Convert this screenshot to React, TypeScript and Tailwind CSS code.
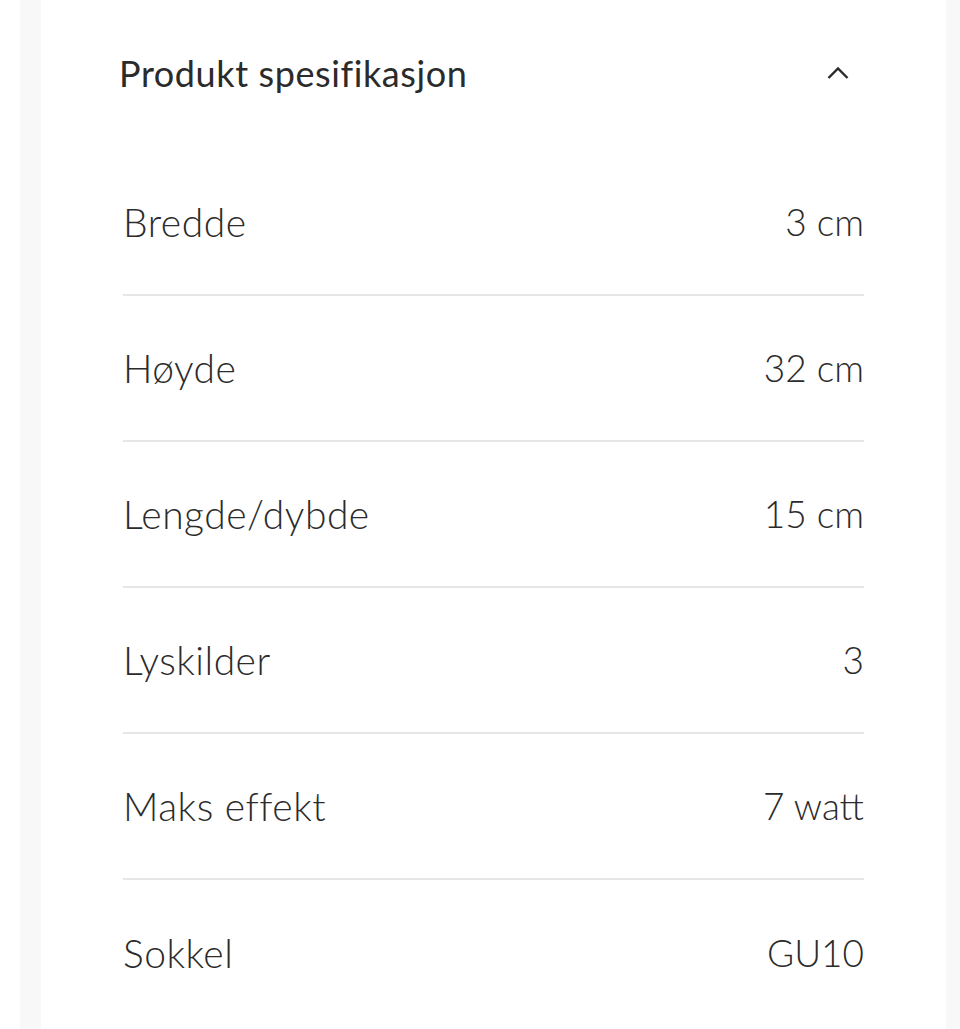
import React from "react";

const specs = [
  { label: "Bredde", value: "3 cm" },
  { label: "Høyde", value: "32 cm" },
  { label: "Lengde/dybde", value: "15 cm" },
  { label: "Lyskilder", value: "3" },
  { label: "Maks effekt", value: "7 watt" },
  { label: "Sokkel", value: "GU10" },
];

export default function App() {
  return (
    <div className="min-h-screen bg-white pl-5 font-['Lato',sans-serif] text-[#2b2b2b]">
      <div className="min-h-screen bg-[#f8f8f8] pl-[21px] pr-[14px]">
        <div className="min-h-[1029px] bg-white">
          {/* Header */}
          <div className="flex h-[146px] items-center justify-between pl-[78px] pr-[97px]">
            <h2 className="text-[36px] leading-[48px] font-normal tracking-[0.6px]">
              Produkt spesifikasjon
            </h2>
            <svg width="22" height="14" viewBox="0 0 22 14" fill="none">
              <path d="M1.5 12L11 2.5L20.5 12" stroke="#2b2b2b" strokeWidth="2.4" />
            </svg>
          </div>

          {/* Rows */}
          <div className="mx-[82px] mt-[4px]">
            {specs.map((s, i) => (
              <div
                key={s.label}
                className={`flex h-[146px] items-center justify-between leading-[48px] font-light ${
                  i < specs.length - 1 ? "border-b-2 border-[#e6e6e6]" : ""
                }`}
              >
                <span className="text-[39px] tracking-[0.5px]">{s.label}</span>
                <span className="text-[37px]">{s.value}</span>
              </div>
            ))}
          </div>
        </div>
      </div>
    </div>
  );
}
